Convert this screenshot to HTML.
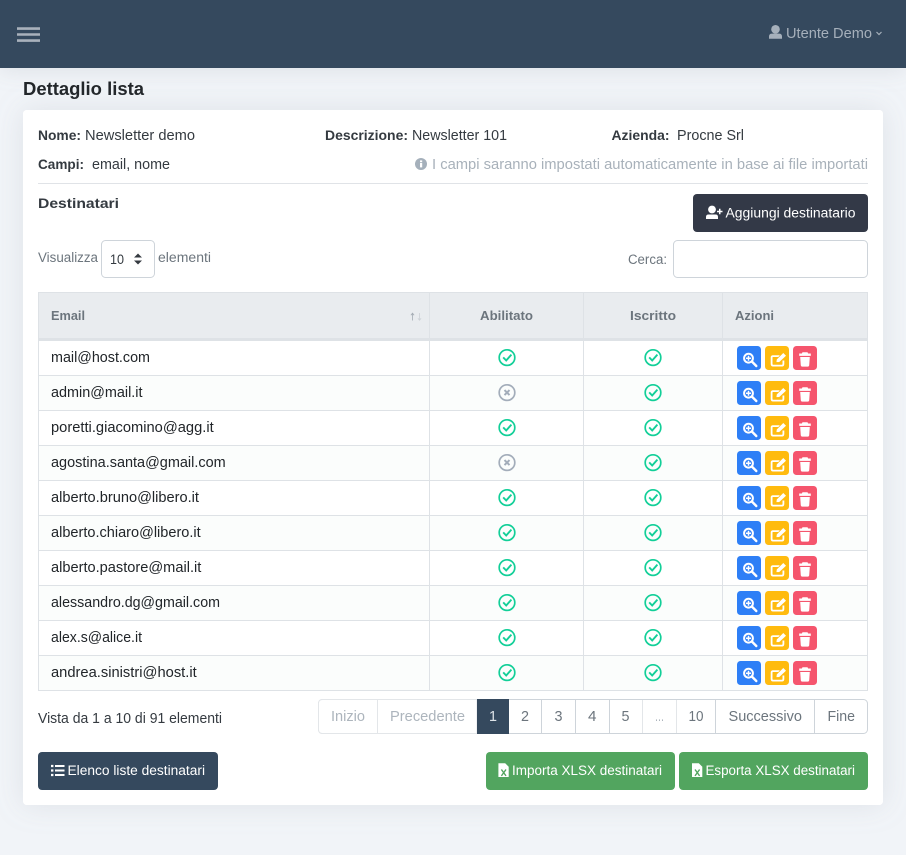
<!DOCTYPE html>
<html lang="it">
<head>
<meta charset="utf-8">
<title>Dettaglio lista</title>
<style>
html,body{margin:0;padding:0;background:#f1f4f8;width:906px;height:855px;overflow:hidden}
svg{display:block}
text{font-family:"Liberation Sans",sans-serif;font-size:14.5px;fill:#343a40}
.b{font-weight:bold;font-size:14px;fill:#343a40}
.m{fill:#6c757d;font-size:13.5px}
.h{font-weight:bold;font-size:13px;fill:#6c757d}
.e{fill:#212529}
.w{fill:#fff;font-size:13.5px}
.p{fill:#6c757d}
.d{fill:#adb5bd}
</style>
</head>
<body>
<svg width="906" height="855" viewBox="0 0 906 855" xmlns="http://www.w3.org/2000/svg">
<defs>
<filter id="s1" x="-10%" y="-10%" width="120%" height="120%"><feDropShadow dx="0" dy="0" stdDeviation="14" flood-color="#9aa1ab" flood-opacity=".22"/></filter>
<filter id="s2" x="-5%" y="-50%" width="110%" height="200%"><feDropShadow dx="0" dy="3" stdDeviation="10" flood-color="#9aa1ab" flood-opacity=".22"/></filter>
<g id="ok" transform="translate(0,-.4)"><circle cx="0" cy="0" r="7.8" fill="none" stroke="#12cf98" stroke-width="1.7"/><path d="M-3.8 -.2 L-.8 2.9 L4.4 -3" fill="none" stroke="#12cf98" stroke-width="1.9"/></g>
<g id="no" transform="translate(0,-.4)"><circle cx="0" cy="0" r="7.8" fill="none" stroke="#a3adba" stroke-width="1.7"/><path d="M-2.5 -2.5 L2.5 2.5 M2.5 -2.5 L-2.5 2.5" fill="none" stroke="#a3adba" stroke-width="2"/></g>
<g id="act">
<rect x="0" y="0" width="24" height="24" rx="3.5" fill="#2e7ff6"/>
<circle cx="11.5" cy="12.2" r="4.4" fill="none" stroke="#fff" stroke-width="2"/>
<path d="M9 12.2 H14 M11.5 9.7 V14.7" stroke="#fff" stroke-width="1.5"/>
<path d="M15.2 15.9 L19.3 20" stroke="#fff" stroke-width="2.4" stroke-linecap="round"/>
<rect x="28" y="0" width="24" height="24" rx="3.5" fill="#ffbb0e"/>
<path d="M42.5 10.1 H36 Q34.6 10.1 34.6 11.5 V18 Q34.6 19.6 36 19.6 H45 Q46.4 19.6 46.4 18 V14.5" fill="none" stroke="#fff" stroke-width="1.8"/>
<path d="M39 16.5 L39.5 13.3 L46.3 6.5 L49.5 9.7 L42.5 16.3 Z" fill="#fff" stroke="#ffbb0e" stroke-width=".7"/>
<rect x="56" y="0" width="24" height="24" rx="3.5" fill="#f5556d"/>
<path d="M62.2 7.5 H73.8 V9.9 H62.2 Z M65.5 6.2 H70.5 L71.2 7.6 H64.8 Z" fill="#fff"/>
<path d="M63.2 11 H72.8 L72.2 19.4 Q72.1 20.6 70.9 20.6 H65.1 Q63.9 20.6 63.8 19.4 Z" fill="#fff"/>
</g>
<g id="xls"><path d="M0 0 H6.8 L10.3 3.5 V13.7 H0 Z" fill="#fff"/><path d="M3 6.2 L7.6 12.6 M7.6 6.2 L3 12.6" stroke="#52a55f" stroke-width="1.4"/></g>
</defs>

<rect width="906" height="855" fill="#f1f4f8"/>
<rect x="0" y="0" width="906" height="68" fill="#35495e" filter="url(#s2)"/>
<rect x="0" y="0" width="906" height="68" fill="#35495e"/>
<path d="M17 28.6 H40 M17 34.5 H40 M17 40.6 H40" stroke="#a9b1bc" stroke-width="2.6"/>
<circle cx="775.5" cy="29.3" r="4.3" fill="#a6b0bb"/>
<path d="M769 38.8 V36.5 Q769 33.6 772 33.6 H779 Q782 33.6 782 36.5 V38.8 Z" fill="#a6b0bb"/>
<text x="786" y="38" textLength="86" lengthAdjust="spacingAndGlyphs" style="fill:#a6b0bb;font-size:15px">Utente Demo</text>
<path d="M876.5 32 L879 34.5 L881.5 32" fill="none" stroke="#a6b0bb" stroke-width="1.2"/>

<text x="23" y="95" textLength="121" lengthAdjust="spacingAndGlyphs" style="font-size:18px;font-weight:bold;fill:#212529">Dettaglio lista</text>

<rect x="23" y="110" width="860" height="695" rx="4" fill="#fff" filter="url(#s1)"/>
<rect x="23" y="110" width="860" height="695" rx="4" fill="#fff"/>

<text class="b" x="38" y="140" textLength="43" lengthAdjust="spacingAndGlyphs">Nome:</text>
<text x="85" y="140" textLength="110" lengthAdjust="spacingAndGlyphs">Newsletter demo</text>
<text class="b" x="325" y="140" textLength="83" lengthAdjust="spacingAndGlyphs">Descrizione:</text>
<text x="412" y="140" textLength="95" lengthAdjust="spacingAndGlyphs">Newsletter 101</text>
<text class="b" x="611.5" y="140" textLength="58" lengthAdjust="spacingAndGlyphs">Azienda:</text>
<text x="677" y="140" textLength="67" lengthAdjust="spacingAndGlyphs">Procne Srl</text>
<text class="b" x="38" y="169" textLength="46" lengthAdjust="spacingAndGlyphs">Campi:</text>
<text x="92" y="169" textLength="78" lengthAdjust="spacingAndGlyphs">email, nome</text>
<circle cx="421" cy="164" r="6" fill="#a5b0bb"/>
<rect x="420" y="163" width="2.2" height="4.4" fill="#fff"/><rect x="420" y="160.4" width="2.2" height="1.8" fill="#fff"/>
<text x="432" y="169" textLength="436" lengthAdjust="spacingAndGlyphs" style="fill:#a8b1ba">I campi saranno impostati automaticamente in base ai file importati</text>
<rect x="38" y="183" width="830" height="1" fill="#e0e3e7"/>
<text class="b" x="38" y="208" textLength="81" lengthAdjust="spacingAndGlyphs">Destinatari</text>

<rect x="693" y="194" width="175" height="38" rx="4" fill="#333947"/>
<circle cx="712" cy="209.5" r="3.9" fill="#fff"/>
<path d="M706 219 V217 Q706 214.5 708.5 214.5 H715.5 Q718 214.5 718 217 V219 Z" fill="#fff"/>
<path d="M717 211.5 H722.5 M719.75 208.8 V214.2" stroke="#fff" stroke-width="1.5"/>
<text class="w" x="725.5" y="217.5" textLength="130" lengthAdjust="spacingAndGlyphs">Aggiungi destinatario</text>

<text class="m" x="38" y="262" textLength="60" lengthAdjust="spacingAndGlyphs">Visualizza</text>
<rect x="101.5" y="240.5" width="53" height="37" rx="4" fill="#fff" stroke="#ced4da"/>
<text x="110" y="264" textLength="14" lengthAdjust="spacingAndGlyphs" style="font-size:14px">10</text>
<path d="M134 257.5 L138 253.5 L142 257.5 Z M134 260.5 L138 264.5 L142 260.5 Z" fill="#343a40"/>
<text class="m" x="158" y="262" textLength="53" lengthAdjust="spacingAndGlyphs">elementi</text>
<text class="m" x="628" y="264" textLength="39" lengthAdjust="spacingAndGlyphs">Cerca:</text>
<rect x="673.5" y="240.5" width="194" height="37" rx="4" fill="#fff" stroke="#ced4da"/>

<!-- table -->
<rect x="38" y="292" width="830" height="399" fill="#fff"/>
<g fill="#fbfdfc">
<rect x="39" y="376" width="828" height="34"/><rect x="39" y="446" width="828" height="34"/><rect x="39" y="516" width="828" height="34"/><rect x="39" y="586" width="828" height="34"/><rect x="39" y="656" width="828" height="34"/>
</g>
<rect x="38" y="292" width="830" height="47" fill="#e9ecef"/>
<rect x="38" y="292" width="830" height="1" fill="#dee2e6"/>
<rect x="38" y="338" width="830" height="3" fill="#dee2e6"/>
<g fill="#dee2e6">
<rect x="38" y="292" width="1" height="399"/><rect x="429" y="292" width="1" height="399"/><rect x="583" y="292" width="1" height="399"/><rect x="722" y="292" width="1" height="399"/><rect x="867" y="292" width="1" height="399"/>
<rect x="38" y="375" width="830" height="1"/><rect x="38" y="410" width="830" height="1"/><rect x="38" y="445" width="830" height="1"/><rect x="38" y="480" width="830" height="1"/><rect x="38" y="515" width="830" height="1"/><rect x="38" y="550" width="830" height="1"/><rect x="38" y="585" width="830" height="1"/><rect x="38" y="620" width="830" height="1"/><rect x="38" y="655" width="830" height="1"/><rect x="38" y="690" width="830" height="1"/>
</g>
<text class="h" x="51" y="320" textLength="34" lengthAdjust="spacingAndGlyphs">Email</text>
<path d="M412.5 320.5 V313.5 M410.9 315.2 L412.5 313.2 L414.1 315.2" fill="none" stroke="#a3abb3" stroke-width=".8"/>
<path d="M419.5 313 V320 M417.9 318.2 L419.5 320.2 L421.1 318.2" fill="none" stroke="#ccd1d6" stroke-width=".8"/>
<text class="h" x="480" y="320" textLength="53" lengthAdjust="spacingAndGlyphs">Abilitato</text>
<text class="h" x="630" y="320" textLength="46" lengthAdjust="spacingAndGlyphs">Iscritto</text>
<text class="h" x="735" y="320" textLength="39" lengthAdjust="spacingAndGlyphs">Azioni</text>

<text class="e" x="51" y="362" textLength="99" lengthAdjust="spacingAndGlyphs">mail@host.com</text>
<text class="e" x="51" y="397" textLength="91.5" lengthAdjust="spacingAndGlyphs">admin@mail.it</text>
<text class="e" x="51" y="432" textLength="162.7" lengthAdjust="spacingAndGlyphs">poretti.giacomino@agg.it</text>
<text class="e" x="51" y="467" textLength="174.7" lengthAdjust="spacingAndGlyphs">agostina.santa@gmail.com</text>
<text class="e" x="51" y="502" textLength="148" lengthAdjust="spacingAndGlyphs">alberto.bruno@libero.it</text>
<text class="e" x="51" y="537" textLength="149.7" lengthAdjust="spacingAndGlyphs">alberto.chiaro@libero.it</text>
<text class="e" x="51" y="572" textLength="150.3" lengthAdjust="spacingAndGlyphs">alberto.pastore@mail.it</text>
<text class="e" x="51" y="607" textLength="169" lengthAdjust="spacingAndGlyphs">alessandro.dg@gmail.com</text>
<text class="e" x="51" y="642" textLength="91" lengthAdjust="spacingAndGlyphs">alex.s@alice.it</text>
<text class="e" x="51" y="677" textLength="145.7" lengthAdjust="spacingAndGlyphs">andrea.sinistri@host.it</text>

<use href="#ok" x="507" y="358"/><use href="#ok" x="653" y="358"/><use href="#act" x="737" y="346"/>
<use href="#no" x="507" y="393"/><use href="#ok" x="653" y="393"/><use href="#act" x="737" y="381"/>
<use href="#ok" x="507" y="428"/><use href="#ok" x="653" y="428"/><use href="#act" x="737" y="416"/>
<use href="#no" x="507" y="463"/><use href="#ok" x="653" y="463"/><use href="#act" x="737" y="451"/>
<use href="#ok" x="507" y="498"/><use href="#ok" x="653" y="498"/><use href="#act" x="737" y="486"/>
<use href="#ok" x="507" y="533"/><use href="#ok" x="653" y="533"/><use href="#act" x="737" y="521"/>
<use href="#ok" x="507" y="568"/><use href="#ok" x="653" y="568"/><use href="#act" x="737" y="556"/>
<use href="#ok" x="507" y="603"/><use href="#ok" x="653" y="603"/><use href="#act" x="737" y="591"/>
<use href="#ok" x="507" y="638"/><use href="#ok" x="653" y="638"/><use href="#act" x="737" y="626"/>
<use href="#ok" x="507" y="673"/><use href="#ok" x="653" y="673"/><use href="#act" x="737" y="661"/>

<text x="38" y="723" textLength="184" lengthAdjust="spacingAndGlyphs">Vista da 1 a 10 di 91 elementi</text>

<!-- pagination -->
<rect x="318.5" y="699.5" width="549" height="34" rx="4" fill="#fff" stroke="#ced4da"/>
<path d="M318.5 703.5 Q318.5 699.5 322.5 699.5 H477 V733.5 H322.5 Q318.5 733.5 318.5 729.5 Z" fill="#fff" stroke="#e3e6e9"/>
<rect x="377" y="700" width="1" height="33" fill="#e3e6e9"/>
<rect x="477" y="699" width="32" height="35" fill="#35495e"/>
<g fill="#ced4da">
<rect x="541" y="700" width="1" height="33"/><rect x="575" y="700" width="1" height="33"/><rect x="609" y="700" width="1" height="33"/><rect x="642" y="700" width="1" height="33" fill="#e3e6e9"/><rect x="676" y="700" width="1" height="33" fill="#e3e6e9"/><rect x="715" y="700" width="1" height="33"/><rect x="814" y="700" width="1" height="33"/>
</g>
<text class="d" x="331" y="721" textLength="34" lengthAdjust="spacingAndGlyphs">Inizio</text>
<text class="d" x="390" y="721" textLength="75" lengthAdjust="spacingAndGlyphs">Precedente</text>
<text x="489" y="721" textLength="8" lengthAdjust="spacingAndGlyphs" style="fill:#dfe4e9">1</text>
<text class="p" x="521" y="721" textLength="8" lengthAdjust="spacingAndGlyphs">2</text>
<text class="p" x="554.5" y="721" textLength="8" lengthAdjust="spacingAndGlyphs">3</text>
<text class="p" x="588" y="721" textLength="8.5" lengthAdjust="spacingAndGlyphs">4</text>
<text class="p" x="621.5" y="721" textLength="8" lengthAdjust="spacingAndGlyphs">5</text>
<text class="d" x="655" y="721" textLength="9" lengthAdjust="spacingAndGlyphs">...</text>
<text class="p" x="688.5" y="721" textLength="15" lengthAdjust="spacingAndGlyphs">10</text>
<text class="p" x="728.5" y="721" textLength="73.5" lengthAdjust="spacingAndGlyphs">Successivo</text>
<text class="p" x="827.5" y="721" textLength="27.5" lengthAdjust="spacingAndGlyphs">Fine</text>

<!-- bottom buttons -->
<rect x="38" y="752" width="180" height="38" rx="4" fill="#35495e"/>
<path d="M55 766 H64.5 M55 770.5 H64.5 M55 775 H64.5" stroke="#fff" stroke-width="1.9"/>
<path d="M51 766 H53.4 M51 770.5 H53.4 M51 775 H53.4" stroke="#fff" stroke-width="2.2"/>
<text class="w" x="67.5" y="775" textLength="137.5" lengthAdjust="spacingAndGlyphs">Elenco liste destinatari</text>

<rect x="486" y="752" width="189" height="38" rx="4" fill="#52a55f"/>
<use href="#xls" x="498.4" y="763.3"/>
<text class="w" x="512" y="775" textLength="150" lengthAdjust="spacingAndGlyphs">Importa XLSX destinatari</text>
<rect x="679" y="752" width="189" height="38" rx="4" fill="#52a55f"/>
<use href="#xls" x="692" y="763.3"/>
<text class="w" x="705.5" y="775" textLength="149.5" lengthAdjust="spacingAndGlyphs">Esporta XLSX destinatari</text>
</svg>
</body>
</html>
